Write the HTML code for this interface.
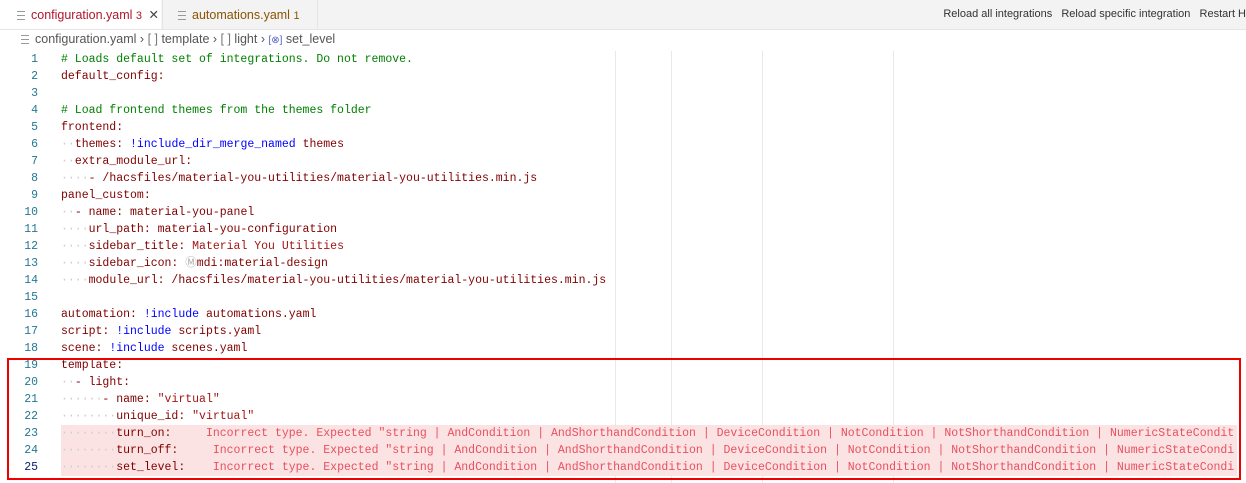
<!DOCTYPE html>
<html><head><meta charset="utf-8"><style>
body{margin:0;width:1246px;height:483px;overflow:hidden;background:#fff;font-family:"Liberation Sans",sans-serif;position:relative}
.tabs{position:absolute;left:0;top:0;width:1246px;height:29px;background:#f3f3f3;border-bottom:1px solid #e5e5e5}
.tab{position:absolute;top:0;height:29px;font-size:12.5px;line-height:31px;white-space:nowrap}
.t1{left:0;width:161px;background:#fff;color:#b0172b}
.t2{left:162px;width:154px;color:#895503;border-left:1px solid #e5e5e5;border-right:1px solid #e5e5e5}
.ic{display:inline-block;width:8px;height:7px;border-top:1px solid #999;border-bottom:1px solid #999;position:relative;margin-right:6px;vertical-align:middle}
.ic:after{content:"";position:absolute;left:0;top:3px;width:8px;border-top:1px solid #999}
.acts{position:absolute;right:0;top:0;line-height:29px;font-size:11px;color:#333;white-space:nowrap}
.bc{position:absolute;left:21px;top:31px;font-size:12.5px;color:#555;line-height:17px}
.code{position:absolute;left:0;top:51px;font-family:"Liberation Mono",monospace;font-size:11.5px}
.l{position:relative;height:17px;line-height:17px;white-space:pre;width:1237px}
.n{position:absolute;left:0;width:38px;text-align:right;color:#237893}
.t{position:absolute;left:61px;color:#800000}
.c{color:#008000}.b{color:#0000ff}.s{color:#a31515}.e{color:#e8505f}
.err:before{content:"";position:absolute;left:61px;right:0;top:0;bottom:0;background:#fbe3e3}
.rul{position:absolute;top:51px;height:432px;width:1px;background:#e8e8e8}
.box{position:absolute;left:7px;top:358px;width:1230px;height:118px;border:2px solid #e00}
.g{color:#ccc}
</style></head><body>
<div class="tabs">
<div class="tab t1"><span style="margin-left:17px" class="ic"></span>configuration.yaml <span style="font-size:11px">3</span> <span style="color:#444;margin-left:3px">✕</span></div>
<div class="tab t2"><span style="margin-left:15px" class="ic"></span>automations.yaml <span style="font-size:11px">1</span></div>
<div class="acts">Reload all integrations &nbsp; Reload specific integration &nbsp; Restart H</div>
</div>
<div class="bc"><span class="ic"></span>configuration.yaml › <span style="color:#777">[ ]</span> template › <span style="color:#777">[ ]</span> light › <span style="color:#5060c0;font-size:10px">[⊗]</span> set_level</div>
<div class="rul" style="left:615px"></div><div class="rul" style="left:671px"></div><div class="rul" style="left:762px"></div><div class="rul" style="left:893px"></div>
<div class="code">
<div class="l"><span class="n">1</span><span class="t c"># Loads default set of integrations. Do not remove.</span></div>
<div class="l"><span class="n">2</span><span class="t">default_config:</span></div>
<div class="l"><span class="n">3</span></div>
<div class="l"><span class="n">4</span><span class="t c"># Load frontend themes from the themes folder</span></div>
<div class="l"><span class="n">5</span><span class="t">frontend:</span></div>
<div class="l"><span class="n">6</span><span class="t"><span class="g">··</span>themes: <span class="b">!include_dir_merge_named</span> themes</span></div>
<div class="l"><span class="n">7</span><span class="t"><span class="g">··</span>extra_module_url:</span></div>
<div class="l"><span class="n">8</span><span class="t"><span class="g">····</span>- /hacsfiles/material-you-utilities/material-you-utilities.min.js</span></div>
<div class="l"><span class="n">9</span><span class="t">panel_custom:</span></div>
<div class="l"><span class="n">10</span><span class="t"><span class="g">··</span>- name: material-you-panel</span></div>
<div class="l"><span class="n">11</span><span class="t"><span class="g">····</span>url_path: material-you-configuration</span></div>
<div class="l"><span class="n">12</span><span class="t"><span class="g">····</span>sidebar_title: <span class="s">Material You Utilities</span></span></div>
<div class="l"><span class="n">13</span><span class="t"><span class="g">····</span>sidebar_icon: <span style="color:#aaa">Ⓜ</span>mdi:material-design</span></div>
<div class="l"><span class="n">14</span><span class="t"><span class="g">····</span>module_url: /hacsfiles/material-you-utilities/material-you-utilities.min.js</span></div>
<div class="l"><span class="n">15</span></div>
<div class="l"><span class="n">16</span><span class="t">automation: <span class="b">!include</span> automations.yaml</span></div>
<div class="l"><span class="n">17</span><span class="t">script: <span class="b">!include</span> scripts.yaml</span></div>
<div class="l"><span class="n">18</span><span class="t">scene: <span class="b">!include</span> scenes.yaml</span></div>
<div class="l"><span class="n">19</span><span class="t">template:</span></div>
<div class="l"><span class="n">20</span><span class="t"><span class="g">··</span>- light:</span></div>
<div class="l"><span class="n">21</span><span class="t"><span class="g">······</span>- name: <span class="s">"virtual"</span></span></div>
<div class="l"><span class="n">22</span><span class="t"><span class="g">········</span>unique_id: <span class="s">"virtual"</span></span></div>
<div class="l err"><span class="n">23</span><span class="t"><span class="g">········</span>turn_on:     <span class="e">Incorrect type. Expected "string | AndCondition | AndShorthandCondition | DeviceCondition | NotCondition | NotShorthandCondition | NumericStateCondit</span></span></div>
<div class="l err"><span class="n">24</span><span class="t"><span class="g">········</span>turn_off:     <span class="e">Incorrect type. Expected "string | AndCondition | AndShorthandCondition | DeviceCondition | NotCondition | NotShorthandCondition | NumericStateCondi</span></span></div>
<div class="l err"><span class="n" style="color:#0b216f">25</span><span class="t"><span class="g">········</span>set_level:    <span class="e">Incorrect type. Expected "string | AndCondition | AndShorthandCondition | DeviceCondition | NotCondition | NotShorthandCondition | NumericStateCondi</span></span></div>
</div>
<div class="box"></div>
</body></html>
